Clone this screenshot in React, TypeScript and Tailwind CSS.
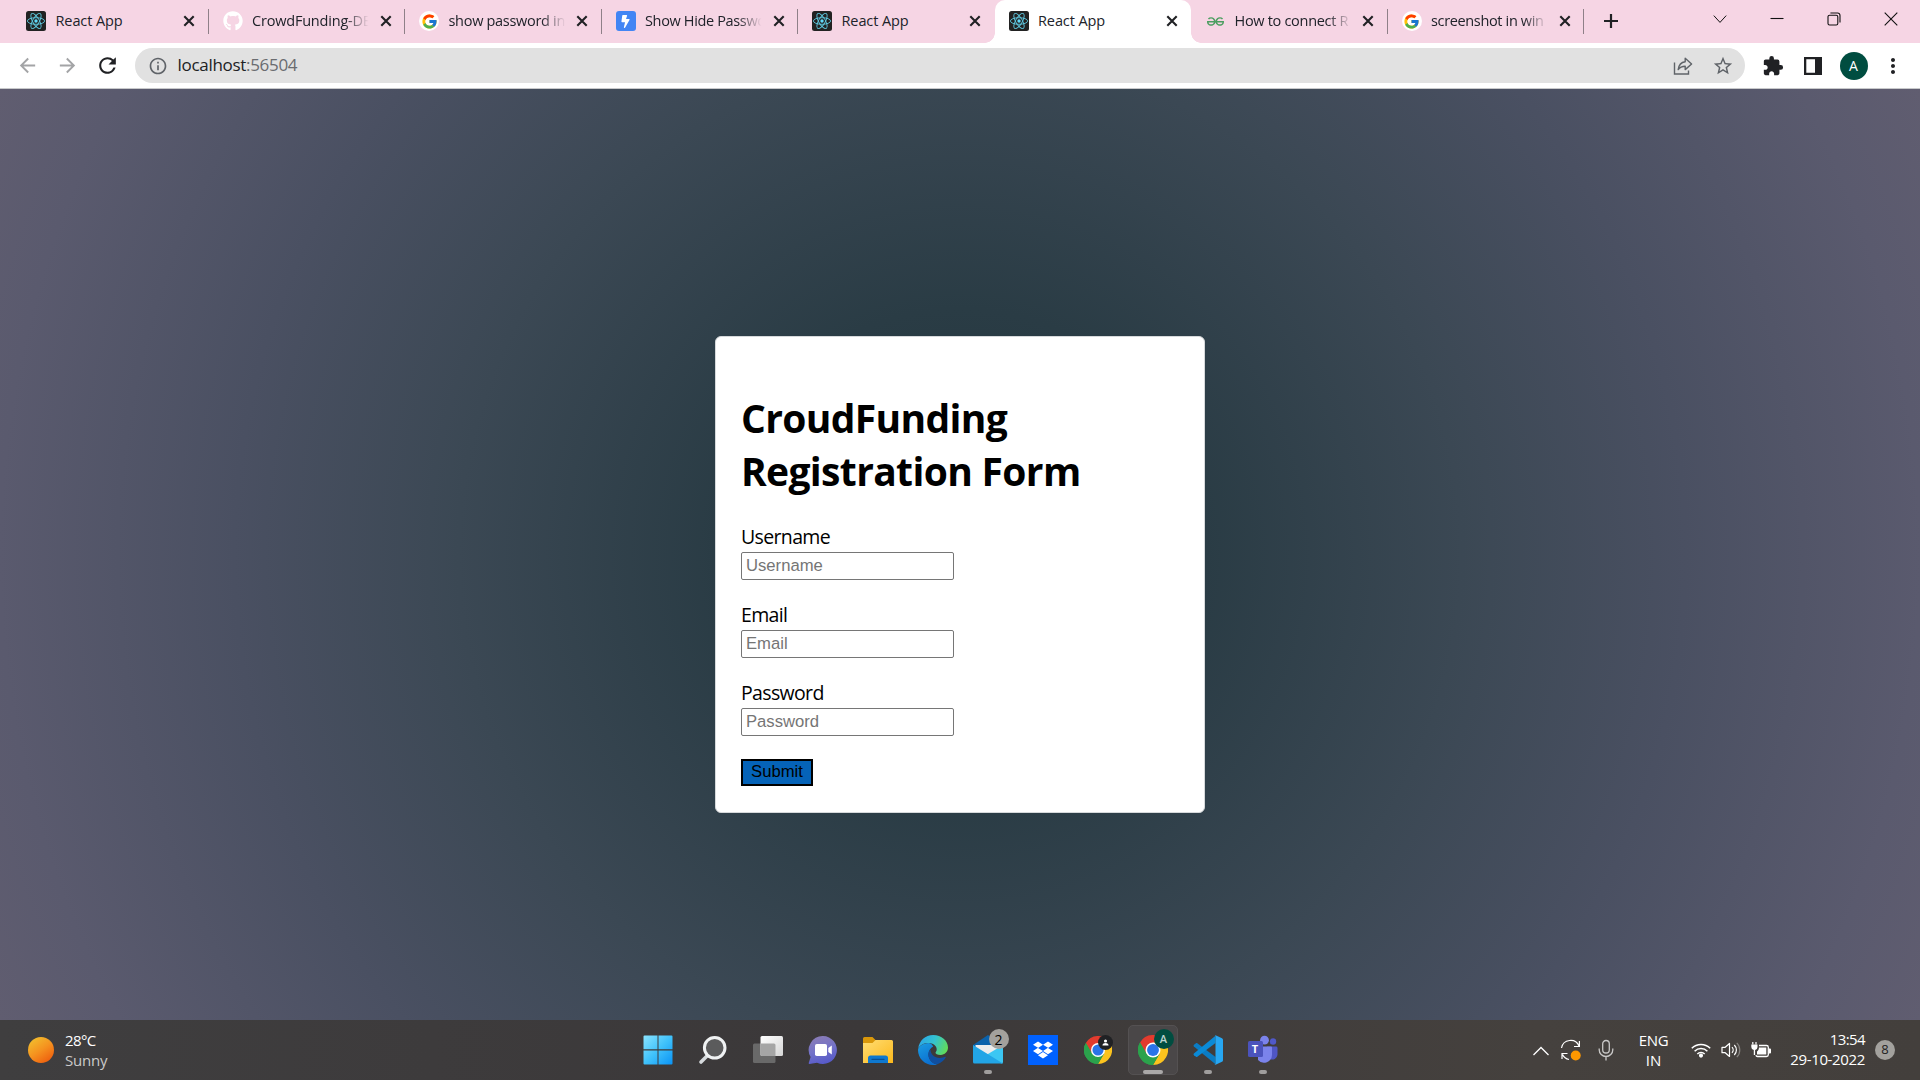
import React from 'react';
import { FaGithub, FaBolt, FaDropbox } from 'react-icons/fa';
import { FcGoogle } from 'react-icons/fc';
import { SiGeeksforgeeks } from 'react-icons/si';
import { MdExtension, MdStarBorder, MdRefresh, MdArrowBack, MdArrowForward, MdMoreVert, MdInfoOutline } from 'react-icons/md';

function ReactFavicon() {
  return (
    <svg viewBox="0 0 20 20" className="size-5 shrink-0">
      <rect width="20" height="20" rx="2.5" fill="#222222" />
      <g fill="none" stroke="#5fc8e0" strokeWidth="0.9">
        <ellipse cx="10" cy="10" rx="8.6" ry="3.3" />
        <ellipse cx="10" cy="10" rx="8.6" ry="3.3" transform="rotate(60 10 10)" />
        <ellipse cx="10" cy="10" rx="8.6" ry="3.3" transform="rotate(120 10 10)" />
      </g>
      <circle cx="10" cy="10" r="1.7" fill="#61dafb" />
    </svg>
  );
}

function GoogleFavicon() {
  return (
    <span className="flex size-5 shrink-0 items-center justify-center rounded-full bg-white">
      <FcGoogle className="size-[17px]" />
    </span>
  );
}

function GithubFavicon() {
  return <FaGithub className="size-5 shrink-0 text-white" />;
}

function BoltFavicon() {
  return (
    <span className="flex size-5 shrink-0 items-center justify-center rounded-[3px] bg-[#4285f4]">
      <FaBolt className="size-[13px] text-white" />
    </span>
  );
}

function GeeksFavicon() {
  return (
    <span className="flex size-5 shrink-0 items-center justify-center">
      <SiGeeksforgeeks className="size-[17px] text-[#4b9e60]" />
    </span>
  );
}

type Tab = { title: string; icon: () => React.JSX.Element; active?: boolean; fade?: boolean; divider?: boolean; spacing: string };

const tabs: Tab[] = [
  { title: 'React App', icon: ReactFavicon, divider: true, spacing: 'tracking-[-0.1px]' },
  { title: 'CrowdFunding-DE', icon: GithubFavicon, divider: true, fade: true, spacing: 'tracking-[-0.2px]' },
  { title: 'show password in', icon: GoogleFavicon, divider: true, fade: true, spacing: 'tracking-[-0.3px]' },
  { title: 'Show Hide Passwo', icon: BoltFavicon, divider: true, fade: true, spacing: 'tracking-[-0.35px]' },
  { title: 'React App', icon: ReactFavicon, spacing: 'tracking-[-0.1px]' },
  { title: 'React App', icon: ReactFavicon, active: true, spacing: 'tracking-[-0.1px]' },
  { title: 'How to connect R', icon: GeeksFavicon, divider: true, fade: true, spacing: 'tracking-[-0.3px]' },
  { title: 'screenshot in win', icon: GoogleFavicon, divider: true, fade: true, spacing: 'tracking-[-0.35px]' },
];

function TabItem({ tab }: { tab: Tab }) {
  const Icon = tab.icon;
  return (
    <div
      className={
        tab.active
          ? 'relative flex h-[43px] w-[196.5px] shrink-0 items-center rounded-t-[10px] bg-white pb-[1px] pl-[14px]'
          : 'relative flex h-[43px] w-[196.5px] shrink-0 items-center pb-[1px] pl-[14px]'
      }
    >
      <Icon />
      <div
        className={
          tab.fade
            ? 'ml-[9.5px] w-[119px] [mask-image:linear-gradient(to_right,#000_78%,transparent_98%)]'
            : 'ml-[9.5px] w-[119px]'
        }
      >
        <span className={`block text-[14.5px] leading-5 whitespace-nowrap text-[#20232a] ${tab.spacing}`}>{tab.title}</span>
      </div>
      <svg viewBox="0 0 12 12" className="ml-[8.5px] size-3 shrink-0">
        <path d="M1.3 1.3 10.7 10.7M10.7 1.3 1.3 10.7" stroke="#202124" strokeWidth="2.1" />
      </svg>
      {tab.divider && <span className="absolute top-[9px] right-0 h-[25px] w-px bg-[#8f8088]" />}
      {tab.active && (
        <>
          <span className="absolute bottom-0 -left-[10px] size-[10px] bg-[radial-gradient(circle_at_0_0,transparent_9.5px,#fff_10px)]" />
          <span className="absolute -right-[10px] bottom-0 size-[10px] bg-[radial-gradient(circle_at_100%_0,transparent_9.5px,#fff_10px)]" />
        </>
      )}
    </div>
  );
}

function TabStrip() {
  return (
    <div className="flex h-[43px] items-center bg-[#f6d5e4] pl-[12px]">
      {tabs.map((tab, i) => (
        <TabItem key={i} tab={tab} />
      ))}
      <svg viewBox="0 0 16 16" className="mb-[1px] ml-[19px] size-4">
        <path d="M8 1v14M1 8h14" stroke="#202124" strokeWidth="2.2" />
      </svg>
      <div className="mr-[22px] ml-auto flex items-center pb-[6px]">
        <svg viewBox="0 0 14 14" className="mr-[43px] size-[14px]">
          <path d="M.8 3.6 7 10.4l6.2-6.8" fill="none" stroke="#111" strokeWidth="1" />
        </svg>
        <svg viewBox="0 0 14 14" className="mr-[43px] size-[14px]">
          <path d="M.5 6.5h13" stroke="#111" strokeWidth="1.1" />
        </svg>
        <svg viewBox="0 0 14 14" className="mr-[43px] size-[14px]">
          <g fill="none" stroke="#111" strokeWidth="1.1">
            <rect x="1" y="3.2" width="9.8" height="9.8" rx="1.6" />
            <path d="M3.4 1h7.2a2.4 2.4 0 0 1 2.4 2.4v7.2" />
          </g>
        </svg>
        <svg viewBox="0 0 14 14" className="size-[14px]">
          <path d="M.7.7l12.6 12.6M13.3.7.7 13.3" stroke="#111" strokeWidth="1.1" />
        </svg>
      </div>
    </div>
  );
}

function ShareIcon() {
  return (
    <svg viewBox="0 0 20 20" className="size-5" fill="none" stroke="#5f6368" strokeWidth="1.4">
      <path d="M1.5 6.5V18h14v-3.5" />
      <path d="M12.2 2.2 18.6 8l-6.4 5.6v-3.4c-3.3 0-5.400.9-7 3.400.5-4.300 2.900-7.400 7-7.900z" strokeLinejoin="round" />
    </svg>
  );
}

function Toolbar() {
  return (
    <div className="flex h-[46px] items-center border-b border-[#c8c9cb] bg-white">
      <MdArrowBack className="ml-[16px] size-[23px] text-[#a3a4a6]" />
      <MdArrowForward className="ml-[17px] size-[23px] text-[#a3a4a6]" />
      <MdRefresh className="ml-[16px] size-[25px] text-[#202124]" />
      <div className="ml-[15px] flex h-[35px] w-[1610px] items-center rounded-full bg-[#e1e1e1]">
        <MdInfoOutline className="ml-[12.5px] size-5 text-[#5f6368]" />
        <span className="mb-[1px] ml-[10px] text-[17px] leading-6 tracking-[-0.3px] text-[#202124]">
          localhost<span className="text-[#6a6c70]">:56504</span>
        </span>
        <div className="mr-[11px] ml-auto flex items-center gap-[19px]">
          <ShareIcon />
          <MdStarBorder className="size-[22px] text-[#5f6368]" />
        </div>
      </div>
      <MdExtension className="ml-[16.5px] size-[22px] text-[#202124]" />
      <svg viewBox="0 0 18 18" className="ml-[20px] size-[18px]">
        <path d="M0 0h18v18H0zM2.300 2.300v13.400h8.700V2.300z" fill="#202124" fillRule="evenodd" />
      </svg>
      <span className="ml-[18px] flex size-7 items-center justify-center rounded-full bg-[#004d40] text-[14px] text-white">A</span>
      <MdMoreVert className="ml-[13px] size-[24px] text-[#202124]" />
    </div>
  );
}

function Field({ name }: { name: string }) {
  return (
    <div className="mb-[21px] flex flex-col">
      <label className="h-[29px] text-[19.5px] leading-[28px] tracking-[-0.65px]">{name}</label>
      <input
        placeholder={name}
        className="h-[28px] w-[213px] rounded-[2px] border border-[#767676] bg-white pr-1 pb-[1px] pl-[4px] font-['Liberation_Sans',Arial,sans-serif] text-[16.67px] placeholder:text-[#757575]"
      />
    </div>
  );
}

function RegistrationPage() {
  return (
    <main className="flex h-[931px] items-start justify-center bg-[radial-gradient(circle_at_center,#1f343b_0%,#2a3c45_23%,#3b4854_47%,#4a5062_68%,#5a5a6e_90%,#605d70_100%)] pt-[247px]">
      <form className="h-[477px] w-[490px] rounded-[6px] border border-[#d6d9db] bg-white px-[25px] pt-[54px] text-black">
        <h1 className="mb-[26px] text-[39px] leading-[53px] font-bold tracking-[-0.65px] whitespace-nowrap">
          CroudFunding
          <br />
          Registration Form
        </h1>
        <Field name="Username" />
        <Field name="Email" />
        <Field name="Password" />
        <button
          type="button"
          className="mt-[23px] flex h-[27px] w-[72px] items-center justify-center border-2 border-black bg-[#0563b8] font-['Liberation_Sans',Arial,sans-serif] text-[16.67px] leading-none"
        >
          Submit
        </button>
      </form>
    </main>
  );
}

function WindowsIcon() {
  return (
    <svg viewBox="0 0 30 30" className="size-[30px]">
      <defs>
        <linearGradient id="win" x1="0" y1="0" x2="1" y2="1">
          <stop offset="0" stopColor="#8be4ff" />
          <stop offset="0.5" stopColor="#40c2fb" />
          <stop offset="1" stopColor="#0a93f5" />
        </linearGradient>
      </defs>
      <path d="M1.500.500H14.500V14.300H.500V1.500A1 1 0 0 1 1.500.500zM15.500.500H28.500a1 1 0 0 1 1 1V14.300h-14zM.500 15.500h14v14H1.500a1 1 0 0 1-1-1zM15.500 15.500h14v13a1 1 0 0 1-1 1h-13z" fill="url(#win)" />
    </svg>
  );
}

function SearchIcon() {
  return (
    <svg viewBox="0 0 30 30" className="size-[30px]">
      <path d="M10 20 3 27" stroke="#d6dadd" strokeWidth="3.600" strokeLinecap="round" />
      <circle cx="16.700" cy="12.800" r="10.300" fill="#5b5b5c" stroke="#f0f2f3" strokeWidth="3" />
    </svg>
  );
}

function TaskViewIcon() {
  return (
    <svg viewBox="0 0 30 30" className="size-[30px]">
      <defs>
        <linearGradient id="tv" x1="0" y1="0" x2="1" y2="1">
          <stop offset="0" stopColor="#fff" />
          <stop offset="1" stopColor="#d5d5d5" />
        </linearGradient>
      </defs>
      <rect x="0" y="8.500" width="22.500" height="19.500" rx="1.500" fill="#696969" />
      <rect x="7.500" y="1" width="22.500" height="20" rx="1.500" fill="url(#tv)" />
      <path d="M7.500 8.500H21a1.500 1.500 0 0 1 1.500 1.500v11H9a1.500 1.500 0 0 1-1.500-1.500z" fill="#a5a5a5" />
    </svg>
  );
}

function ChatIcon() {
  return (
    <svg viewBox="0 0 30 30" className="size-[30px]">
      <defs>
        <linearGradient id="chat" x1="0.300" y1="0" x2="0.600" y2="1">
          <stop offset="0" stopColor="#8a7cb6" />
          <stop offset="0.500" stopColor="#7372c8" />
          <stop offset="1" stopColor="#5558c9" />
        </linearGradient>
      </defs>
      <path d="M15 1a14 14 0 1 1-6 26.700L1.500 29c-.800 0-1-.500-.700-1.200L2.600 22A14 14 0 0 1 15 1z" fill="url(#chat)" />
      <rect x="7" y="9" width="12" height="12" rx="1.800" fill="#fff" />
      <path d="m20.300 13 3.500-2.600v9.200L20.300 17z" fill="#fff" />
    </svg>
  );
}

function FolderIcon() {
  return (
    <svg viewBox="0 0 30 30" className="size-[30px]">
      <defs>
        <linearGradient id="fold" x1="0" y1="0" x2="1" y2="1">
          <stop offset="0" stopColor="#ffdd73" />
          <stop offset="1" stopColor="#fcb81c" />
        </linearGradient>
      </defs>
      <path d="M0 3.500A1.500 1.500 0 0 1 1.500 2h8l3.500 3.500V10H0z" fill="#d9970a" />
      <path d="M0 8h9.500l3-3H28.500A1.500 1.500 0 0 1 30 6.500V28H0z" fill="url(#fold)" />
      <path d="M5 28v-5a2.500 2.500 0 0 1 2.500-2.500h15A2.500 2.500 0 0 1 25 23v5z" fill="#0f78cf" />
      <path d="M9 24.300h12" stroke="#0a4f93" strokeWidth="1.300" strokeLinecap="round" />
    </svg>
  );
}

function EdgeIcon() {
  return (
    <svg viewBox="0 0 30 30" className="size-[30px]">
      <defs>
        <linearGradient id="edgeTop" x1="0" y1="0.300" x2="1" y2="0.600">
          <stop offset="0" stopColor="#2aa5e8" />
          <stop offset="0.500" stopColor="#34c3cf" />
          <stop offset="1" stopColor="#62dc58" />
        </linearGradient>
        <linearGradient id="edgeLow" x1="0" y1="0" x2="0.500" y2="1">
          <stop offset="0" stopColor="#1b9de2" />
          <stop offset="1" stopColor="#0b6fd0" />
        </linearGradient>
      </defs>
      <path d="M.200 13.500C1.200 5.800 7.200 0 15.200 0 23.500 0 30 5.600 30 12.500c0 4.400-3.400 7.400-7.300 7.400-3.500 0-5.200-1.200-5.200-2.200 0-.900 1.200-1.200 1.200-3.500 0-3.500-3.800-6.200-8.200-6.200C6 8 2 10 .200 13.500z" fill="url(#edgeTop)" />
      <path d="M10.500 8C4.500 8 0 12 0 15c0 8.300 6.700 15 15 15 1.500 0 3-.200 4.300-.600-5-.900-8.800-5-8.800-10.200 0-3.700 2.200-6.200 4.700-7.600C14.300 9.500 12.700 8 10.500 8z" fill="url(#edgeLow)" />
      <path d="M12.500 14.500c-1.300 1.200-2.200 2.900-2.200 5 0 5.300 4.300 9.500 9.200 9.800 3.500-1.200 6.400-3.600 8.200-6.700.300-.600-.200-1.100-.800-.800-1.400.700-3.100 1.200-5 1.200-5.600 0-9.400-3.800-9.400-8.500z" fill="#104fa0" />
    </svg>
  );
}

function MailIcon() {
  return (
    <svg viewBox="0 0 30 30" className="size-[30px]">
      <path d="M0 10 15 0l15 10v5H0z" fill="#0b62ab" />
      <path d="M2.500 10h25v12h-25z" fill="#ececec" />
      <path d="M30 10v17a1.500 1.500 0 0 1-1.500 1.500L10 22z" fill="#3cc7f3" />
      <path d="M0 10l30 18.500H1.500A1.500 1.500 0 0 1 0 27z" fill="#22a5e6" />
    </svg>
  );
}

function DropboxIcon() {
  return (
    <span className="flex size-[30px] items-center justify-center bg-[#0061fe]">
      <FaDropbox className="size-[20px] text-white" />
    </span>
  );
}

function ChromeIcon({ small }: { small?: boolean }) {
  return (
    <svg viewBox="0 0 48 48" className={small ? 'size-[28px]' : 'size-[30px]'}>
      <path d="M24 24 3.200 12A24 24 0 0 1 44.800 12z" fill="#e33b2e" />
      <path d="M24 24 3.200 12A24 24 0 0 0 24 48L34.400 30z" fill="#2ba24c" />
      <path d="M24 12H44.800A24 24 0 0 1 24 48L34.400 30z" fill="#fcc31e" />
      <path d="M3.200 12 13.600 30 24 24V12z" fill="#e33b2e" />
      <path d="M3.200 12 13.600 30 24 36 34.400 30 24 48A24 24 0 0 1 3.200 12z" fill="#2ba24c" />
      <circle cx="24" cy="24" r="12" fill="#fff" />
      <circle cx="24" cy="24" r="9.500" fill="#2b74e8" />
    </svg>
  );
}

function VsCodeIcon() {
  return (
    <svg viewBox="0 0 30 30" className="size-[30px]">
      <path d="M1 9.800 3 8.200c.400-.300.900-.300 1.300 0L22.500 22v7.200L.900 11.500c-.500-.500-.500-1.200.100-1.700z" fill="#0a7cc4" />
      <path d="M1 20.200 3 21.800c.400.300.900.300 1.300 0L22.500 8V.800L.900 18.500c-.500.500-.500 1.200.100 1.700z" fill="#0b8ad6" />
      <path d="M22 0l7 3.200c.600.300 1 .900 1 1.600v20.400c0 .700-.400 1.300-1 1.600L22 30c-.400.100-.700 0-1-.200.600.300 1.500-.100 1.500-1V1.200c0-.900-.900-1.300-1.500-1 .300-.200.600-.300 1-.200z" fill="#27a7f2" />
    </svg>
  );
}

function TeamsIcon() {
  return (
    <div className="relative size-[30px]">
      <svg viewBox="0 0 30 30" className="size-[30px]">
        <circle cx="25" cy="6.500" r="3.200" fill="#5059c9" />
        <path d="M19 11.500h9a1.500 1.500 0 0 1 1.500 1.500v6.500a5.500 5.500 0 0 1-8 4.500z" fill="#4f56c4" />
        <circle cx="16.500" cy="5.200" r="4.400" fill="#7b83eb" />
        <path d="M10 11.500h13a1 1 0 0 1 1 1V19.500a8 8 0 0 1-14 5.500z" fill="#7b83eb" />
        <rect x="0" y="6" width="15" height="16" rx="1.500" fill="#4b53bc" />
      </svg>
      <span className="absolute top-[6px] left-0 w-[15px] text-center font-['Open_Sans',sans-serif] text-[11px] leading-4 font-bold text-white">T</span>
    </div>
  );
}

type Pin = { icon: React.ReactNode; badge?: React.ReactNode; mark?: boolean; active?: boolean };

const pins: Pin[] = [
  { icon: <WindowsIcon /> },
  { icon: <SearchIcon /> },
  { icon: <TaskViewIcon /> },
  { icon: <ChatIcon /> },
  { icon: <FolderIcon /> },
  { icon: <EdgeIcon /> },
  {
    icon: <MailIcon />,
    mark: true,
    badge: <span className="absolute top-[4px] right-[4px] flex size-5 items-center justify-center rounded-full bg-[#a3a19d] text-[14px] text-black">2</span>,
  },
  { icon: <DropboxIcon /> },
  {
    icon: <ChromeIcon small />,
    badge: (
      <span className="absolute top-[10px] right-[10px] flex size-[15px] items-center justify-center rounded-full bg-[#202124]">
        <svg viewBox="0 0 8 8" className="size-[7px]" fill="#fff">
          <circle cx="4" cy="2.300" r="1.800" />
          <path d="M.500 7.500c0-2 2-2.800 3.500-2.800s3.500.800 3.500 2.800z" />
        </svg>
      </span>
    ),
  },
  {
    icon: <ChromeIcon />,
    active: true,
    badge: <span className="absolute top-[3px] right-[3px] flex size-5 items-center justify-center rounded-full bg-[#004d40] text-[11px] font-semibold text-[#bcd3cf]">A</span>,
  },
  { icon: <VsCodeIcon />, mark: true },
  { icon: <TeamsIcon />, mark: true },
];

function TrayIcons() {
  return (
    <>
      <svg viewBox="0 0 16 10" className="mt-[1px] h-[10px] w-4">
        <path d="M.500 9 8 1.500 15.500 9" fill="none" stroke="#fff" strokeWidth="1.300" />
      </svg>
      <svg viewBox="0 0 21 22" className="ml-[11px] h-[22px] w-[21px]">
        <g fill="none" stroke="#fff" strokeWidth="1.200">
          <path d="M1.500 9A9.200 9.200 0 0 1 19 7M19.400 2v5.500H14" />
          <path d="M2 20v-5.500h5.500M2.500 15.500A9.200 9.200 0 0 0 9 20.500" />
        </g>
        <circle cx="15.700" cy="16.500" r="5" fill="#ff9800" />
      </svg>
      <svg viewBox="0 0 16 22" className="ml-[17px] h-[22px] w-4" fill="none" stroke="#c9c8c7" strokeWidth="1.300">
        <rect x="4.700" y="1.500" width="6.600" height="12.500" rx="3.300" />
        <path d="M1.200 9.500v1.200a6.800 6.800 0 0 0 13.600 0V9.500M8 17.500v4" />
      </svg>
    </>
  );
}

function StatusIcons() {
  return (
    <div className="flex items-center">
      <svg viewBox="0 0 20 16" className="h-4 w-5" fill="none" stroke="#fff" strokeWidth="1.500">
        <path d="M.800 6.200a13 13 0 0 1 18.400 0M3.600 9.200a9 9 0 0 1 12.800 0M6.300 12a5.200 5.200 0 0 1 7.400 0" />
        <circle cx="10" cy="13.600" r="1.300" fill="#fff" />
      </svg>
      <svg viewBox="0 0 20 16" className="ml-[10px] h-4 w-5" fill="none" stroke="#fff" strokeWidth="1.200">
        <path d="M1 5.300h3.200L8.500 1.500v13L4.200 10.700H1z" strokeLinejoin="round" />
        <path d="M11 5.200a4 4 0 0 1 0 5.600M13.300 3a7 7 0 0 1 0 10" />
        <path d="M15.800.800a10.200 10.200 0 0 1 0 14.400" stroke="#85827f" />
      </svg>
      <svg viewBox="0 0 20 16" className="ml-[10px] h-4 w-5">
        <path d="M1.800 0v2.500M5 0v2.500" stroke="#fff" strokeWidth="1.200" />
        <path d="M.300 2.500h6.200V5a3 3 0 0 1-2.400 2.900V13H2.800V7.900A3 3 0 0 1 .300 5z" fill="#fff" />
        <path d="M8 3.500h7.500a1.800 1.800 0 0 1 1.800 1.800v7.400a1.800 1.800 0 0 1-1.800 1.800H6.500a2 2 0 0 1-1.700-1.200" fill="none" stroke="#fff" strokeWidth="1.300" />
        <path d="M8 5.500h7.300v7H6V9.500C7.300 8.500 8 7 8 5.500zM18 6.500h1a1 1 0 0 1 1 1v3a1 1 0 0 1-1 1h-1z" fill="#fff" />
      </svg>
    </div>
  );
}

function Taskbar() {
  return (
    <footer className="grid h-[60px] grid-cols-[630px_660px_1fr] bg-[linear-gradient(to_right,#3f3e3f,#3b3839_45%,#45413e_80%,#433f3c)] text-[15px] text-white">
      <div className="flex items-center pl-[28px]">
        <span className="size-[26px] rounded-full bg-[linear-gradient(145deg,#f2bd2d_10%,#f5921f_50%,#ef6410_85%)]" />
        <div className="mb-[1px] ml-[11px] flex flex-col leading-5">
          <span className="tracking-[-0.6px]">28°C</span>
          <span className="tracking-[-0.2px] text-[#cbcaca]">Sunny</span>
        </div>
      </div>
      <div className="flex">
        {pins.map((pin, i) => (
          <div key={i} className="flex h-[60px] w-[55px] items-center justify-center">
            <div
              className={
                pin.active
                  ? 'relative flex size-[50px] items-center justify-center rounded-[5px] border border-[#545152] bg-[#4a4748]'
                  : 'relative flex size-[50px] items-center justify-center'
              }
            >
              {pin.icon}
              {pin.badge}
              {pin.mark && <span className="absolute bottom-[1px] h-1 w-2 rounded-full bg-[#a09e9d]" />}
              {pin.active && <span className="absolute bottom-0 h-1 w-5 rounded-full bg-[#aaa8a8]" />}
            </div>
          </div>
        ))}
      </div>
      <div className="flex items-center justify-end pr-[25px]">
        <TrayIcons />
        <div className="mb-[1px] ml-[19px] flex w-[41px] flex-col text-center leading-5">
          <span className="tracking-[-0.3px]">ENG</span>
          <span>IN</span>
        </div>
        <div className="ml-[17px]">
          <StatusIcons />
        </div>
        <div className="mb-[2px] ml-[14px] flex w-[80px] flex-col items-end leading-5 whitespace-nowrap">
          <span className="tracking-[-0.600px]">13:54</span>
          <span className="tracking-[-0.350px]">29-10-2022</span>
        </div>
        <span className="ml-[10px] flex size-5 items-center justify-center rounded-full bg-[#a3a19d] text-[13px] text-[#222]">8</span>
      </div>
    </footer>
  );
}

export default function App() {
  return (
    <div className="flex h-[1080px] w-[1920px] flex-col overflow-hidden bg-white font-['Open_Sans','Noto_Sans',sans-serif]">
      <TabStrip />
      <Toolbar />
      <RegistrationPage />
      <Taskbar />
    </div>
  );
}
